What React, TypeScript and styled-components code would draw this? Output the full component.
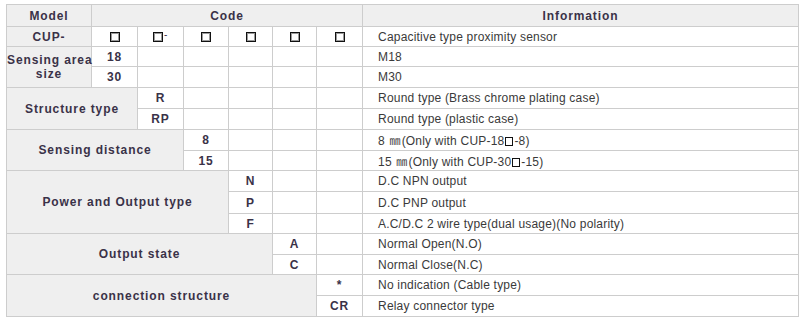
import React from "react";
import styled, { createGlobalStyle } from "styled-components";

const GlobalStyle = createGlobalStyle`
  body {
    margin: 0;
    background: #fff;
    font-family: "Liberation Sans", Arial, sans-serif;
  }
`;

const Wrapper = styled.div`
  padding: 4px 0 0 6px;
`;

const Table = styled.table`
  width: 792px;
  table-layout: fixed;
  border-collapse: collapse;
  font-size: 12px;
`;

const Cell = styled.td<{ $label?: boolean; $info?: boolean }>`
  border: 1px solid #cdcdcd;
  padding: 0;
  text-align: ${(p) => (p.$info ? "left" : "center")};
  padding-left: ${(p) => (p.$info ? "15px" : "0")};
  background: ${(p) => (p.$label ? "#efefef" : "#fff")};
  color: ${(p) => (p.$info ? "#3a3a3a" : "#3a3248")};
  font-weight: ${(p) => (p.$info ? 400 : 700)};
  letter-spacing: ${(p) => (p.$info ? "0.2px" : "0.9px")};
  white-space: nowrap;
  vertical-align: middle;
`;

const Row = styled.tr<{ $h: number }>`
  height: ${(p) => p.$h}px;
`;

const Box = styled.span<{ $small?: boolean }>`
  display: inline-block;
  width: ${(p) => (p.$small ? 8 : 10)}px;
  height: ${(p) => (p.$small ? 9 : 10)}px;
  border: 1px solid #111;
  box-shadow: ${(p) => (p.$small ? "none" : "inset 0 0 0 1px #9a9a9a")};
  box-sizing: border-box;
  vertical-align: -1px;
  letter-spacing: 0;
  margin: ${(p) => (p.$small ? "0 1px" : "0")};
`;

const Dash = styled.span`
  font-weight: 400;
  font-size: 10px;
  position: relative;
  top: -3px;
  margin-left: 1px;
`;

const Unit = styled.span`
  font-family: "Noto Sans CJK KR", sans-serif;
  font-size: 11px;
  margin: 0 1px;
`;

const empty = (n: number) =>
  Array.from({ length: n }, (_, i) => <Cell key={i} />);

export default function App() {
  return (
    <>
      <GlobalStyle />
      <Wrapper>
        <Table>
          <colgroup>
            <col style={{ width: 85 }} />
            <col style={{ width: 46 }} />
            <col style={{ width: 46 }} />
            <col style={{ width: 45 }} />
            <col style={{ width: 44 }} />
            <col style={{ width: 44 }} />
            <col style={{ width: 46 }} />
            <col style={{ width: 436 }} />
          </colgroup>
          <tbody>
            <Row $h={22}>
              <Cell $label>Model</Cell>
              <Cell $label colSpan={6}>Code</Cell>
              <Cell $label>Information</Cell>
            </Row>
            <Row $h={20}>
              <Cell $label>CUP-</Cell>
              <Cell><Box /></Cell>
              <Cell><Box /><Dash>-</Dash></Cell>
              <Cell><Box /></Cell>
              <Cell><Box /></Cell>
              <Cell><Box /></Cell>
              <Cell><Box /></Cell>
              <Cell $info>Capacitive type proximity sensor</Cell>
            </Row>
            <Row $h={20}>
              <Cell $label rowSpan={2}>Sensing area<br />size</Cell>
              <Cell>18</Cell>
              {empty(5)}
              <Cell $info>M18</Cell>
            </Row>
            <Row $h={21}>
              <Cell>30</Cell>
              {empty(5)}
              <Cell $info>M30</Cell>
            </Row>
            <Row $h={21}>
              <Cell $label colSpan={2} rowSpan={2}>Structure type</Cell>
              <Cell>R</Cell>
              {empty(4)}
              <Cell $info>Round type (Brass chrome plating case)</Cell>
            </Row>
            <Row $h={21}>
              <Cell>RP</Cell>
              {empty(4)}
              <Cell $info>Round type (plastic case)</Cell>
            </Row>
            <Row $h={21}>
              <Cell $label colSpan={3} rowSpan={2}>Sensing distance</Cell>
              <Cell>8</Cell>
              {empty(3)}
              <Cell $info>8 <Unit>㎜</Unit>(Only with CUP-18<Box $small />-8)</Cell>
            </Row>
            <Row $h={20}>
              <Cell>15</Cell>
              {empty(3)}
              <Cell $info>15 <Unit>㎜</Unit>(Only with CUP-30<Box $small />-15)</Cell>
            </Row>
            <Row $h={21}>
              <Cell $label colSpan={4} rowSpan={3}>Power and Output type</Cell>
              <Cell>N</Cell>
              {empty(2)}
              <Cell $info>D.C NPN output</Cell>
            </Row>
            <Row $h={22}>
              <Cell>P</Cell>
              {empty(2)}
              <Cell $info>D.C PNP output</Cell>
            </Row>
            <Row $h={20}>
              <Cell>F</Cell>
              {empty(2)}
              <Cell $info>A.C/D.C 2 wire type(dual usage)(No polarity)</Cell>
            </Row>
            <Row $h={21}>
              <Cell $label colSpan={5} rowSpan={2}>Output state</Cell>
              <Cell>A</Cell>
              {empty(1)}
              <Cell $info>Normal Open(N.O)</Cell>
            </Row>
            <Row $h={20}>
              <Cell>C</Cell>
              {empty(1)}
              <Cell $info>Normal Close(N.C)</Cell>
            </Row>
            <Row $h={21}>
              <Cell $label colSpan={6} rowSpan={2}>connection structure</Cell>
              <Cell>*</Cell>
              <Cell $info>No indication (Cable type)</Cell>
            </Row>
            <Row $h={21}>
              <Cell>CR</Cell>
              <Cell $info>Relay connector type</Cell>
            </Row>
          </tbody>
        </Table>
      </Wrapper>
    </>
  );
}
